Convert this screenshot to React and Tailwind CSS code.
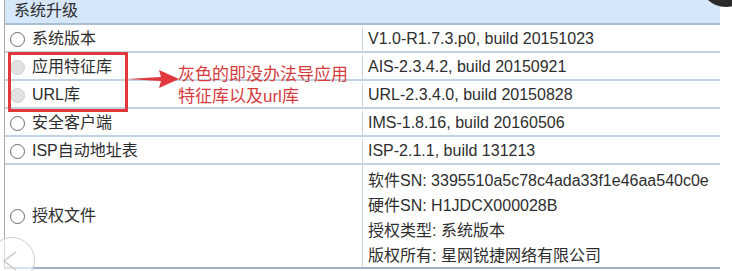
import React from "react";

const rows = [
  { name: "系统版本", value: "V1.0-R1.7.3.p0, build 20151023" },
  { name: "应用特征库", value: "AIS-2.3.4.2, build 20150921", disabled: true },
  { name: "URL库", value: "URL-2.3.4.0, build 20150828", disabled: true },
  { name: "安全客户端", value: "IMS-1.8.16, build 20160506" },
  { name: "ISP自动地址表", value: "ISP-2.1.1, build 131213" },
];

const license = [
  "软件SN: 3395510a5c78c4ada33f1e46aa540c0e",
  "硬件SN: H1JDCX000028B",
  "授权类型: 系统版本",
  "版权所有: 星网锐捷网络有限公司",
];

const Radio = ({ disabled }) => (
  <span
    className={
      disabled
        ? "w-[15px] h-[15px] rounded-full border border-[#cfcfcf] bg-[#e2e2e2] shrink-0"
        : "w-[15px] h-[15px] rounded-full border border-[#6a6a6a] bg-white shrink-0"
    }
  />
);

const App = () => {
  return (
    <div className="w-[732px] h-[271px] bg-white relative overflow-hidden text-[#2e2e2e] font-['Liberation_Sans','Noto_Sans_CJK_SC',sans-serif]">
      <div className="ml-[4px] w-[716px] border-l border-[#a9a9a9]">
        <div className="h-[25px] bg-[#d5e7f8] border-b-2 border-[#a8bfd6] pl-[9px] text-[16px] leading-[22px]">
          系统升级
        </div>
        {rows.map((r) => (
          <div key={r.name} className="h-[28px] flex border-b-2 border-[#c4d3e2] text-[16px] pt-[2px]">
            <div className="w-[358px] flex items-center gap-[7px] pl-[5px] border-r border-[#c9d5e1]">
              <Radio disabled={r.disabled} />
              <span>{r.name}</span>
            </div>
            <div className="flex-1 flex items-center pl-[5px]">{r.value}</div>
          </div>
        ))}
        <div className="h-[104px] flex border-b-2 border-[#9fb2c5] text-[16px]">
          <div className="w-[358px] flex items-center gap-[7px] pl-[5px] border-r border-[#c9d5e1]">
            <Radio />
            <span>授权文件</span>
          </div>
          <div className="flex-1 flex flex-col pl-[5px] pt-[3px] leading-[25px]">
            {license.map((l) => (
              <span key={l}>{l}</span>
            ))}
          </div>
        </div>
      </div>

      <div className="absolute left-[8px] top-[52px] w-[120px] h-[60px] border-[3px] border-[#e0383c]" />
      <svg className="absolute left-[127px] top-[68px]" width="54" height="22" viewBox="0 0 54 22">
        <path d="M0 11 L34 9 L32 2 L52 11 L32 20 L34 13 Z" fill="#e0383c" />
      </svg>
      <div className="absolute left-[178px] top-[64px] text-[17px] leading-[22px] text-[#d43c3e]">
        <div>灰色的即没办法导应用</div>
        <div>特征库以及url库</div>
      </div>

      <div className="absolute left-[699px] top-[-47px] w-[54px] h-[54px] rounded-full bg-[#2b2b2b]" />
      <div className="absolute left-[-11px] top-[237px] w-[46px] h-[46px] rounded-full border-[1.5px] border-[#cfcfcf] bg-white/60" />
      <svg className="absolute left-[2px] top-[251px]" width="16" height="20" viewBox="0 0 16 20">
        <path d="M14 1 L2 10 L14 19" fill="none" stroke="#c8c8c8" strokeWidth="1.5" />
      </svg>
    </div>
  );
};

export default App;
